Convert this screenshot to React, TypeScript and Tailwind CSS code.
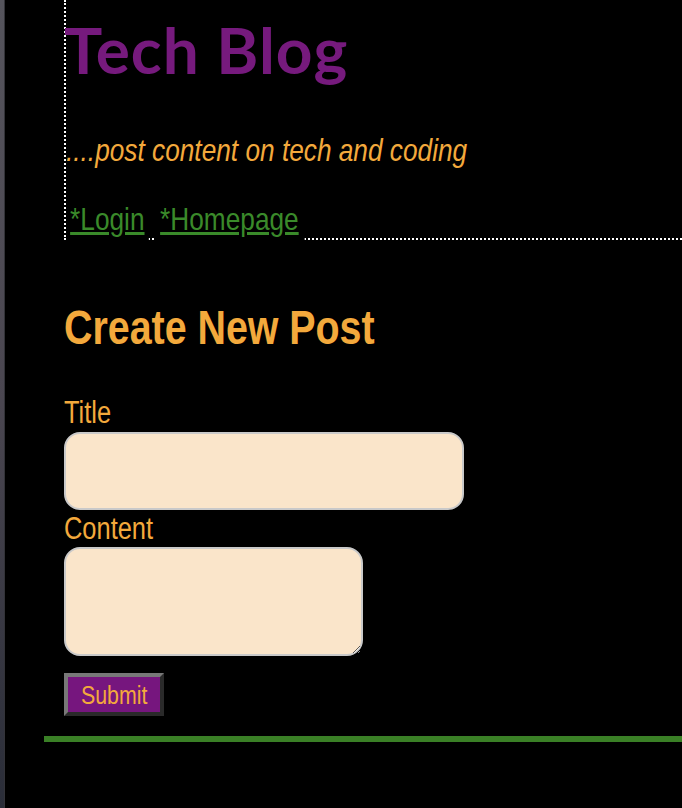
export default function App() {
  const narrow = "inline-block origin-left scale-x-[0.82]";
  return (
    <div className="flex min-h-[808px] bg-black">
      <div className="w-[4px] shrink-0 bg-gradient-to-b from-[#55545c] via-[#4a4650] to-[#2a2d38]" />
      <div className="w-[1px] shrink-0 bg-[#333338]" />
      <main className="flex flex-1 flex-col pl-[39px] font-['Liberation_Sans',Arial,sans-serif]">
        <header className="ml-[20px] border-b-2 border-l-2 border-dotted border-white">
          <h1 className="ml-[-2px] mt-[18px] h-[64px] font-['Lato',sans-serif] text-[64px] font-bold leading-[64px] tracking-[1px] text-[#761a7d]">
            Tech Blog
          </h1>
          <p className="mt-[50px] text-[32px] italic leading-[36px] text-[#f3a93c]">
            <span className={narrow}>....post content on tech and coding</span>
          </p>
          <nav className="mt-[33px] flex h-[37px] origin-left scale-x-[0.82] items-start text-[32px] leading-[37px]">
            <a href="#" className="block h-[40px] bg-black px-[5px] text-[#3a8a2a] underline">
              *Login
            </a>
            <a href="#" className="ml-[7px] block h-[40px] bg-black px-[7px] text-[#3a8a2a] underline">
              *Homepage
            </a>
          </nav>
        </header>
        <section className="ml-[20px] mt-[60px]">
          <h2 className="text-[48px] font-bold leading-[56px] text-[#f3a93c]">
            <span className={narrow}>Create New Post</span>
          </h2>
          <form className="mt-[40px] flex flex-col items-start">
            <label className="text-[31px] leading-[34px] text-[#f3a93c]">
              <span className={narrow}>Title</span>
            </label>
            <input
              type="text"
              className="mt-[2px] h-[78px] w-[400px] rounded-[16px] border-2 border-[#c9c9c9] bg-[#fae5ca] px-2 outline-none"
            />
            <label className="mt-[2px] text-[31px] leading-[34px] text-[#f3a93c]">
              <span className={narrow}>Content</span>
            </label>
            <textarea className="mt-[1px] h-[109px] w-[299px] rounded-[16px] border-2 border-[#c9c9c9] bg-[#fae5ca] p-2 outline-none" />
            <button
              type="submit"
              className="mt-[17px] h-[43px] w-[100px] border-4 border-t-[#787878] border-l-[#787878] border-b-[#2a2a2a] border-r-[#2a2a2a] bg-[#76167e] pl-[13px] text-left text-[26px] leading-[30px] text-[#f3a93c]"
            >
              <span className={narrow}>Submit</span>
            </button>
          </form>
        </section>
        <div className="mt-[20px] h-[6px] bg-[#3a8026]" />
      </main>
    </div>
  );
}
